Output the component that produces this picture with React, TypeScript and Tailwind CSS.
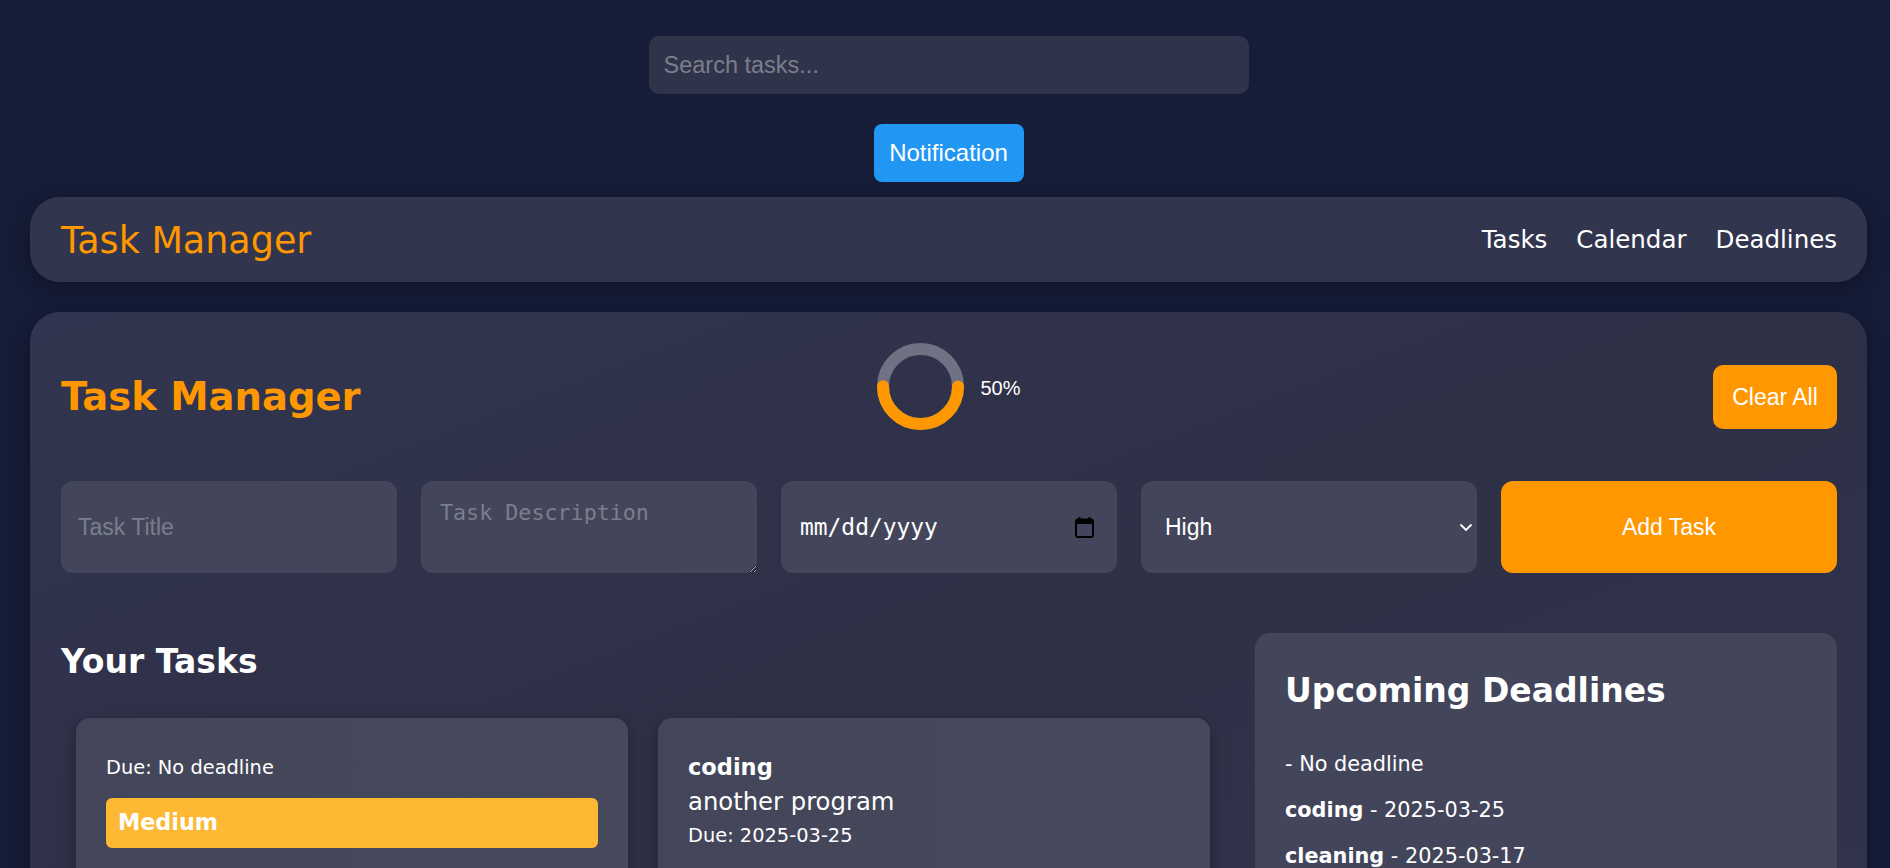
import { useState } from "react";

type Task = {
  title: string;
  description: string;
  due: string;
  priority?: string;
};

const tasks: Task[] = [
  { title: "", description: "", due: "No deadline", priority: "Medium" },
  { title: "coding", description: "another program", due: "2025-03-25" },
];

const deadlines = [
  { title: "", date: "No deadline" },
  { title: "coding", date: "2025-03-25" },
  { title: "cleaning", date: "2025-03-17" },
];

function ProgressRing({ percent }: { percent: number }) {
  const r = 37.5;
  const c = 2 * Math.PI * r;
  return (
    <div className="flex items-center gap-[16px]">
      <svg width="87" height="87" viewBox="0 0 87 87">
        <circle cx="43.5" cy="43.5" r={r} fill="none" stroke="#6e7282" strokeWidth="12" />
        <circle
          cx="43.5"
          cy="43.5"
          r={r}
          fill="none"
          stroke="#ff9800"
          strokeWidth="12"
          strokeLinecap="round"
          strokeDasharray={`${(c * percent) / 100} ${c}`}
        />
      </svg>
      <span className="mt-[3px] font-['Liberation_Sans',sans-serif] text-[20px] text-white">
        {percent}%
      </span>
    </div>
  );
}

function CalendarIcon() {
  return (
    <svg width="19" height="21" viewBox="0 0 19 21">
      <rect x="3.5" y="0" width="2" height="4" fill="#000" />
      <rect x="13.5" y="0" width="2" height="4" fill="#000" />
      <rect x="1" y="2.5" width="17" height="17.5" rx="2" fill="none" stroke="#000" strokeWidth="2" />
      <rect x="1" y="2.5" width="17" height="4.5" fill="#000" />
    </svg>
  );
}

export default function App() {
  const [search, setSearch] = useState("");

  return (
    <div className="min-h-screen overflow-hidden bg-[#161d38] pl-[30px] pr-[23px] pt-[36px] font-['DejaVu_Sans',sans-serif] text-white">
      {/* search + notification */}
      <div className="flex flex-col items-center">
        <input
          value={search}
          onChange={(e) => setSearch(e.target.value)}
          placeholder="Search tasks..."
          className="h-[58px] w-[600px] rounded-[10px] bg-[#30344a] px-[15px] font-['Liberation_Sans',sans-serif] text-[23.5px] text-white outline-none placeholder:text-[#7b7e8a]"
        />
        <button className="mt-[30px] h-[58px] w-[150px] rounded-[8px] bg-[#2196f3] font-['Liberation_Sans',sans-serif] text-[24px] text-white">
          Notification
        </button>
      </div>

      {/* NAV */}
      <nav className="mt-[15px] flex h-[85px] items-center justify-between rounded-[30px] bg-[#31354e] pl-[31px] pr-[30px] shadow-[0_6px_22px_rgba(0,0,0,0.35)]">
        <span className="mt-[4px] text-[36.5px] leading-none text-[#ff9800]">Task Manager</span>
        <div className="mt-[2px] flex items-center gap-[29px] text-[24.5px] leading-none">
          <a>Tasks</a>
          <a>Calendar</a>
          <a>Deadlines</a>
        </div>
      </nav>

      {/* Main card */}
      <main className="mt-[30px] min-h-[600px] rounded-[30px] bg-linear-to-br from-[#31354f] via-[#2e3046] to-[#31344d] pb-[40px] pl-[31px] pr-[30px] pt-[31px] shadow-[0_6px_22px_rgba(0,0,0,0.35)]">
        <div className="grid grid-cols-3 items-start">
          <h1 className="mt-[35px] text-[38.5px] font-bold leading-none text-[#ff9800]">Task Manager</h1>
          <div className="justify-self-center">
            <ProgressRing percent={50} />
          </div>
          <button className="mt-[22px] h-[64px] w-[124px] justify-self-end rounded-[10px] bg-[#ff9800] font-['Liberation_Sans',sans-serif] text-[23px] text-white">
            Clear All
          </button>
        </div>

        {/* form */}
        <div className="mt-[51px] grid h-[92px] grid-cols-5 gap-[24px]">
          <input
            placeholder="Task Title"
            className="h-full min-w-0 rounded-[12px] bg-[#43465a] px-[17px] font-['Liberation_Sans',sans-serif] text-[23px] text-white outline-none placeholder:text-[#7b7e8b]"
          />
          <textarea
            placeholder="Task Description"
            className="h-full min-w-0 rounded-[12px] bg-[#43465a] px-[19px] pt-[18px] font-['DejaVu_Sans_Mono',monospace] text-[21.7px] leading-[28px] text-white outline-none placeholder:text-[#7b7e8b]"
          />
          <div className="flex h-full min-w-0 items-center justify-between rounded-[12px] bg-[#43465a] pl-[19px] pr-[23px]">
            <span className="font-['DejaVu_Sans_Mono',monospace] text-[22.9px] text-white">mm/dd/yyyy</span>
            <CalendarIcon />
          </div>
          <div className="flex h-full min-w-0 items-center justify-between rounded-[12px] bg-[#43465a] pl-[24px] pr-[4px]">
            <span className="font-['Liberation_Sans',sans-serif] text-[23px] text-white">High</span>
            <svg width="14" height="9" viewBox="0 0 14 9">
              <polyline points="1.5,1.5 7,7 12.5,1.5" fill="none" stroke="#fff" strokeWidth="1.8" />
            </svg>
          </div>
          <button className="h-full min-w-0 rounded-[12px] bg-[#ff9800] font-['Liberation_Sans',sans-serif] text-[23px] text-white">
            Add Task
          </button>
        </div>

        {/* lower section */}
        <div className="mt-[60px] grid grid-cols-[2fr_1fr] gap-[30px]">
          <div>
            <h2 className="mt-[12px] text-[33px] font-bold leading-none">Your Tasks</h2>
            <div className="mt-[40px] grid grid-cols-2 gap-[30px] px-[15px]">
              {tasks.map((t, i) => (
                <div
                  key={i}
                  className="min-h-[260px] rounded-[14px] bg-linear-to-r from-[#43465a] to-[#47485b] px-[30px] pt-[33px] shadow-[0_4px_16px_rgba(0,0,0,0.3)]"
                >
                  {t.title && <h3 className="text-[22.5px] font-bold leading-[33px]">{t.title}</h3>}
                  {t.description && <p className="text-[24.3px] leading-[35px]">{t.description}</p>}
                  <p className="mt-[2px] text-[19.4px] leading-[29px]">Due: {t.due}</p>
                  {t.priority && (
                    <div className="mt-[16px] flex h-[50px] items-center rounded-[6px] bg-[#fdb934] px-[12px] text-[22.3px] font-bold">
                      {t.priority}
                    </div>
                  )}
                </div>
              ))}
            </div>
          </div>

          <div className="min-h-[300px] rounded-[15px] bg-[#43465a] px-[30px] pt-[41px]">
            <h2 className="text-[33px] font-bold leading-none">Upcoming Deadlines</h2>
            <ul className="mt-[43px] flex flex-col gap-[18px] text-[20.8px] leading-[28px]">
              {deadlines.map((d, i) => (
                <li key={i}>
                  {d.title && <b className="font-bold">{d.title}</b>} - {d.date}
                </li>
              ))}
            </ul>
          </div>
        </div>
      </main>
    </div>
  );
}
